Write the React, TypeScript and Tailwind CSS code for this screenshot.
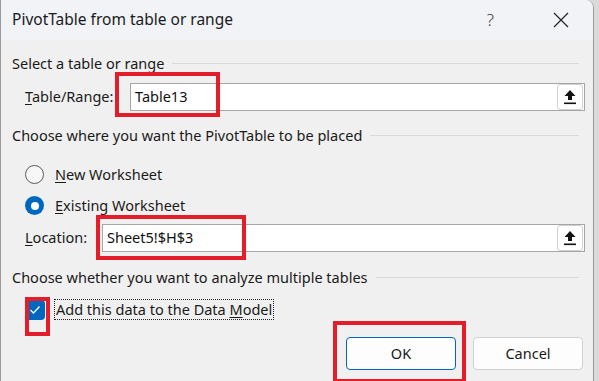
import React from "react";

const font = { fontFamily: '"Noto Sans", "Open Sans", sans-serif' };

const UploadIcon = () => (
  <svg width="14" height="16" viewBox="0 0 14 16">
    <path d="M7 1 L12.5 7 L9 7 L9 11 L5 11 L5 7 L1.5 7 Z" fill="#111" />
    <rect x="1" y="13.5" width="12" height="1.6" fill="#111" />
  </svg>
);

const RefInput = ({ value, width }: { value: string; width: string }) => (
  <div className={`flex h-[28px] ${width} items-center border border-[#a6a6a6] bg-white`}>
    <span className="flex-1 pl-[4px] text-[14.5px] text-[#111]">{value}</span>
    <button
      type="button"
      className="mr-[1px] flex h-[26px] w-[26px] items-center justify-center rounded-[3px] border border-[#d0d0d0] bg-white"
    >
      <UploadIcon />
    </button>
  </div>
);

const GroupHeading = ({ children }: { children: React.ReactNode }) => (
  <div className="flex items-center gap-[8px] pr-[14px]">
    <span className="whitespace-nowrap text-[14.5px] leading-[20px] text-[#1a1a1a]">{children}</span>
    <div className="h-px flex-1 bg-[#d9d9d9]" />
  </div>
);

const Radio = ({ checked, children }: { checked?: boolean; children: React.ReactNode }) => (
  <div className="flex h-[31px] items-center pl-[24px]">
    {checked ? (
      <span className="flex h-[19px] w-[19px] items-center justify-center rounded-full bg-[#0067c0]">
        <span className="h-[8px] w-[8px] rounded-full bg-white" />
      </span>
    ) : (
      <span className="h-[19px] w-[19px] rounded-full border-[1.5px] border-[#5a5a5a] bg-[#f7f7f7]" />
    )}
    <span className="ml-[11px] text-[14.5px] text-[#1a1a1a]">{children}</span>
  </div>
);

export default function App() {
  return (
    <div className="relative flex h-[381px] w-[599px] overflow-hidden bg-[#dadada]" style={font}>
      <div className="flex h-full w-[594px] flex-col rounded-tr-[8px] border-l border-r border-[#9a9a9a] bg-[#f0f0f0]">
        {/* title bar */}
        <div className="flex h-[40px] shrink-0 items-center rounded-tr-[8px] bg-[#f1f3f7] pl-[11px]">
          <span className="flex-1 text-[15.5px] text-[#1a1a1a]">PivotTable from table or range</span>
          <span className="mr-[59px] text-[17px] font-light text-[#333]">?</span>
          <svg width="16" height="16" viewBox="0 0 16 16" className="mr-[24px]">
            <path d="M1 1 L15 15 M15 1 L1 15" stroke="#222" strokeWidth="1.2" />
          </svg>
        </div>

        <div className="flex flex-col pl-[11px]">
          <div className="mt-[13px]">
            <GroupHeading>Select a table or range</GroupHeading>
          </div>
          <div className="mt-[10px] flex items-center pl-[13px]">
            <span className="w-[105px] text-[14.5px] text-[#1a1a1a]">
              <span className="underline underline-offset-2">T</span>able/Range:
            </span>
            <RefInput value="Table13" width="w-[455px]" />
          </div>

          <div className="mt-[14px]">
            <GroupHeading>Choose where you want the PivotTable to be placed</GroupHeading>
          </div>
          <div className="mt-[14px] -ml-[11px]">
            <Radio>
              <span className="underline underline-offset-2">N</span>ew Worksheet
            </Radio>
            <Radio checked>
              <span className="underline underline-offset-2">E</span>xisting Worksheet
            </Radio>
          </div>
          <div className="mt-[3px] flex items-center pl-[13px]">
            <span className="w-[77px] text-[14.5px] text-[#1a1a1a]">
              <span className="underline underline-offset-2">L</span>ocation:
            </span>
            <RefInput value="Sheet5!$H$3" width="w-[483px]" />
          </div>

          <div className="mt-[15px]">
            <GroupHeading>Choose whether you want to analyze multiple tables</GroupHeading>
          </div>
          <div className="mt-[12px] flex items-center pl-[13px]">
            <span className="flex h-[20px] w-[20px] items-center justify-center rounded-[4px] bg-[#0067c0]">
              <svg width="12" height="10" viewBox="0 0 12 10">
                <path d="M1.5 5 L4.5 8 L10.5 1.5" stroke="#fff" strokeWidth="1.3" fill="none" />
              </svg>
            </span>
            <span className="ml-[9px] border border-dotted border-[#222] px-[1px] text-[14.5px] leading-[19px] text-[#1a1a1a]">
              Add this data to the Data <span className="underline underline-offset-2">M</span>odel
            </span>
          </div>

          <div className="mt-[17px] flex justify-end gap-[17px] pr-[10px]">
            <button
              type="button"
              className="h-[33px] w-[110px] rounded-[4px] border border-[#0067c0] bg-[#fdfdfd] text-[14.5px] text-[#1a1a1a]"
            >
              OK
            </button>
            <button
              type="button"
              className="h-[33px] w-[110px] rounded-[4px] border border-[#d0d0d0] bg-[#fdfdfd] text-[14.5px] text-[#1a1a1a]"
            >
              Cancel
            </button>
          </div>
        </div>
      </div>

      {/* red annotation boxes */}
      <div className="absolute left-[115px] top-[72px] h-[45px] w-[105px] border-[4px] border-[#e31e2a]" />
      <div className="absolute left-[96px] top-[215px] h-[45px] w-[150px] border-[4px] border-[#e31e2a]" />
      <div className="absolute left-[25px] top-[297px] h-[39px] w-[25px] border-[4px] border-[#e31e2a]" />
      <div className="absolute left-[333px] top-[321px] h-[62px] w-[133px] border-[4px] border-[#e31e2a]" />
    </div>
  );
}
